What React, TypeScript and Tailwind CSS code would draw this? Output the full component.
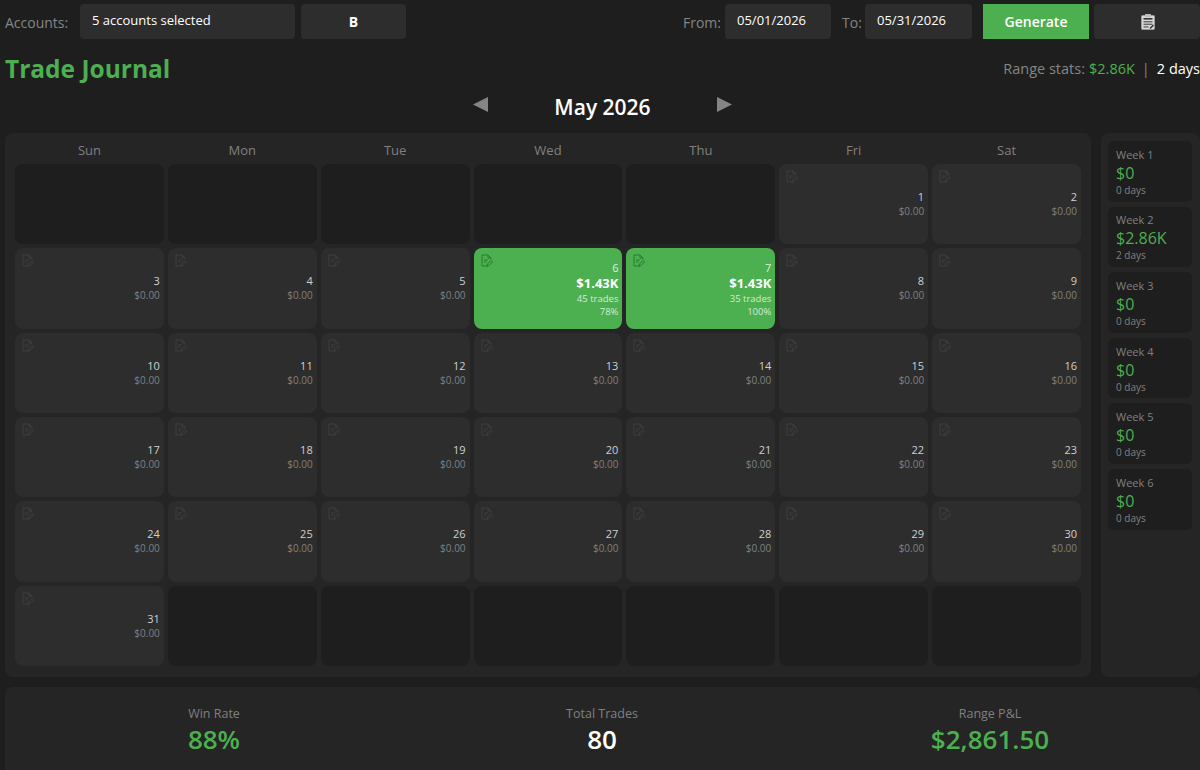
const days = ['Sun', 'Mon', 'Tue', 'Wed', 'Thu', 'Fri', 'Sat']

const weeks = [
  { label: 'Week 1', value: '$0', days: '0 days' },
  { label: 'Week 2', value: '$2.86K', days: '2 days' },
  { label: 'Week 3', value: '$0', days: '0 days' },
  { label: 'Week 4', value: '$0', days: '0 days' },
  { label: 'Week 5', value: '$0', days: '0 days' },
  { label: 'Week 6', value: '$0', days: '0 days' }
]

const wins: Record<number, { pnl: string; trades: string; rate: string }> = {
  6: { pnl: '$1.43K', trades: '45 trades', rate: '78%' },
  7: { pnl: '$1.43K', trades: '35 trades', rate: '100%' }
}

// May 2026 starts on a Friday, so 5 blanks in front and 6 rows in total
const cells: (number | null)[] = [
  ...Array(5).fill(null),
  ...Array.from({ length: 31 }, (_, i) => i + 1),
  ...Array(6).fill(null)
]

const NoteIcon = ({ className }: { className: string }) => (
  <svg
    viewBox="0 0 12 13"
    fill="none"
    stroke="currentColor"
    strokeWidth="1"
    className={className}>
    <path d="M7 12H1V1H7L10 4V5.5" />
    <path d="M7 1V4H10" />
    <path d="M3 6H7M3 8H5.5" />
    <path d="M6 12L6.5 10L10 6.5L11.5 8L8 11.5Z" />
  </svg>
)

const ClipboardIcon = () => (
  <svg viewBox="0 0 14 16" className="h-4 w-[14px]">
    <rect x="0.5" y="1.5" width="13" height="14" rx="1" fill="#d8d8d8" stroke="#9a9a9a" />
    <rect x="4" y="0" width="6" height="3" rx="0.5" fill="#bdbdbd" />
    <rect x="2.5" y="4" width="9" height="1.6" fill="#333" />
    <rect x="2.5" y="7" width="9" height="1.4" fill="#666" />
    <rect x="2.5" y="9.6" width="9" height="1.4" fill="#666" />
    <rect x="2.5" y="12.2" width="5" height="1.4" fill="#666" />
    <path d="M9 14.5L12.5 11" stroke="#333" strokeWidth="1.4" />
  </svg>
)

const DayCell = ({ day }: { day: number | null }) => {
  if (day === null) {
    return <div className="rounded-lg bg-[#1e1e1e]" />
  }

  const win = wins[day]

  if (win) {
    return (
      <div className="relative flex flex-col items-end rounded-lg bg-[#4caf50] px-1 pt-3 text-right">
        <NoteIcon className="absolute left-[7px] top-[6px] h-[13px] w-[12px] text-[#2b7a30]" />
        <span className="text-[11px] leading-[15px] text-[#dff0e0]">{day}</span>
        <span className="text-[13px] font-bold leading-[17px] text-white">{win.pnl}</span>
        <span className="text-[9.5px] leading-[14px] text-[#d6ecd7]">{win.trades}</span>
        <span className="text-[9.5px] leading-[12px] text-[#d6ecd7]">{win.rate}</span>
      </div>
    )
  }

  return (
    <div className="relative flex flex-col items-end rounded-lg bg-[#2d2d2d] px-1 pt-[26px] text-right">
      <NoteIcon className="absolute left-[7px] top-[6px] h-[13px] w-[12px] text-[#3f3f3f]" />
      <span className="text-[11px] leading-[14px] text-[#d0d0d0]">{day}</span>
      <span className="text-[10px] leading-[14px] text-[#808080]">$0.00</span>
    </div>
  )
}

const App = () => {
  return (
    <div className="flex h-[770px] w-[1200px] flex-col overflow-hidden bg-[#1e1e1e] pl-[5px] pt-1 font-['Open_Sans',sans-serif]">
      <div className="flex h-[35px] shrink-0 items-center text-[13px]">
        <span className="w-[75px] pt-[3px] text-sm text-[#858585]">Accounts:</span>
        <div className="flex h-full w-[215px] items-center rounded-sm bg-[#2d2d2d] pl-3 pb-[2px] text-white">
          5 accounts selected
        </div>
        <div className="ml-[6px] flex h-full w-[105px] items-center justify-center rounded-sm bg-[#2d2d2d] text-sm font-bold text-white">
          B
        </div>
        <span className="ml-[277px] w-[42px] pt-[3px] text-sm text-[#858585]">From:</span>
        <div className="flex h-full w-[106px] items-center rounded-sm bg-[#2d2d2d] pl-3 pb-[2px] text-white">
          05/01/2026
        </div>
        <span className="ml-[11px] w-[23px] pt-[3px] text-sm text-[#858585]">To:</span>
        <div className="flex h-full w-[107px] items-center rounded-sm bg-[#2d2d2d] pl-3 pb-[2px] text-white">
          05/31/2026
        </div>
        <div className="ml-[11px] flex h-full w-[106px] items-center justify-center bg-[#4caf50] text-sm font-semibold text-white">
          Generate
        </div>
        <div className="ml-[5px] flex h-full w-[106px] items-center justify-center rounded-sm bg-[#2d2d2d] pl-[2px]">
          <ClipboardIcon />
        </div>
      </div>

      <div className="mt-[11px] flex h-[38px] shrink-0 items-center justify-between">
        <h1 className="text-[24.5px] font-bold text-[#4caf50]">Trade Journal</h1>
        <div className="flex items-center whitespace-nowrap text-[14.5px] text-[#858585]">
          Range stats:
          <span className="ml-1 font-medium text-[#4caf50]">$2.86K</span>
          <span className="mx-[7px]">|</span>
          <span className="text-white">2 days</span>
        </div>
      </div>

      <div className="flex h-[40px] shrink-0 items-center justify-center">
        <svg viewBox="0 0 15 15" className="mb-[7px] h-[15px] w-[15px] fill-[#858585]">
          <path d="M15 0V15L0 7.5Z" />
        </svg>
        <span className="w-[229px] text-center text-[21px] font-semibold text-white">May 2026</span>
        <svg viewBox="0 0 15 15" className="mb-[7px] h-[15px] w-[15px] fill-[#858585]">
          <path d="M0 0V15L15 7.5Z" />
        </svg>
      </div>

      <div className="mt-[5px] flex h-[544px] shrink-0 gap-[10px]">
        <div className="flex w-[1086px] flex-col rounded-lg bg-[#252525] px-[10px] pb-[11px]">
          <div className="grid h-[31px] grid-cols-7 gap-1">
            {days.map((d) => (
              <div key={d} className="flex items-center justify-center pt-[5px] text-[13px] text-[#808080]">
                {d}
              </div>
            ))}
          </div>
          <div className="grid flex-1 grid-cols-7 grid-rows-6 gap-1">
            {cells.map((day, i) => (
              <DayCell key={i} day={day} />
            ))}
          </div>
        </div>

        <div className="flex flex-1 flex-col gap-[5px] rounded-lg bg-[#252525] pl-[7px] pr-2 pt-2">
          {weeks.map((w) => (
            <div key={w.label} className="flex h-[60.6px] flex-col justify-center rounded-md bg-[#1e1e1e] pl-2 pt-[2px]">
              <span className="text-[11px] leading-[14px] text-[#808080]">{w.label}</span>
              <span className="text-base font-medium leading-[22px] text-[#4caf50]">{w.value}</span>
              <span className="text-[10px] leading-[13px] text-[#808080]">{w.days}</span>
            </div>
          ))}
        </div>
      </div>

      <div className="mt-[10px] grid h-[90px] shrink-0 grid-cols-3 rounded-lg bg-[#252525] pl-[15px] pr-4 pt-[17px] text-center">
        <div className="flex flex-col items-center">
          <span className="text-[12.5px] leading-[19px] text-[#808080]">Win Rate</span>
          <span className="text-[26px] font-semibold leading-[33px] text-[#4caf50]">88%</span>
        </div>
        <div className="flex flex-col items-center">
          <span className="text-[12.5px] leading-[19px] text-[#808080]">Total Trades</span>
          <span className="text-[26px] font-semibold leading-[33px] text-white">80</span>
        </div>
        <div className="flex flex-col items-center">
          <span className="text-[12.5px] leading-[19px] text-[#808080]">Range P&amp;L</span>
          <span className="text-[26px] font-semibold leading-[33px] text-[#4caf50]">$2,861.50</span>
        </div>
      </div>
    </div>
  )
}

export default App
